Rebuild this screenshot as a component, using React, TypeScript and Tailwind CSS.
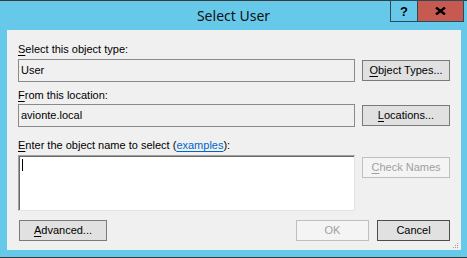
import React from "react";

const font = { fontFamily: '"Liberation Sans", Arial, sans-serif' };

function Btn({
  children,
  className = "",
  disabled = false,
  dark = false,
}: {
  children: React.ReactNode;
  className?: string;
  disabled?: boolean;
  dark?: boolean;
}) {
  const look = disabled
    ? "border-[#bfbfbf] bg-[#f4f4f4] text-[#a0a0a0]"
    : dark
    ? "border-[#4d4d4d] bg-[#e1e1e1] text-black"
    : "border-[#7a7a7a] bg-[#e1e1e1] text-black";
  return (
    <div
      className={`flex h-[21px] items-center justify-center border text-[11px] leading-[13px] ${look} ${className}`}
    >
      {children}
    </div>
  );
}

function U({ children }: { children: React.ReactNode }) {
  return <span className="underline underline-offset-[2px]">{children}</span>;
}

export default function App() {
  return (
    <div
      className="flex h-[258px] w-[467px] flex-col border-y border-[#3a3a3a] bg-[#67c9ea]"
      style={font}
    >
      {/* title bar */}
      <div className="relative flex h-[29px] items-center justify-center">
        <span
          className="pt-[1px] text-[14px] leading-[18px] text-[#111]"
          style={{ fontFamily: '"Noto Sans", "Open Sans", sans-serif' }}
        >
          Select User
        </span>
        <div className="absolute -top-px right-[3px] flex h-[22px] border border-[#2e4a58]">
          <div className="flex w-[27px] items-center justify-center border-r border-[#2e4a58] bg-[#67c9ea] text-[13px] font-bold leading-none text-black">
            ?
          </div>
          <div className="flex w-[45px] items-center justify-center bg-[#c75a50]">
            <svg width="11" height="8" viewBox="0 0 11 8">
              <path d="M1 0.5 L10 7.5 M10 0.5 L1 7.5" stroke="#000" strokeWidth="2.4" />
            </svg>
          </div>
        </div>
      </div>

      {/* client */}
      <div className="relative ml-[7px] h-[220px] w-[454px] bg-[#f0f0f0] px-[11px] text-[11px] leading-[13px] text-black">
        <div className="mt-[13px]">
          <U>S</U>elect this object type:
        </div>
        <div className="mt-[3px] flex items-start">
          <div className="flex h-[23px] w-[337px] items-center border border-[#8a8a8a] pl-[2px]">
            User
          </div>
          <Btn className="ml-[7px] mt-px w-[88px]">
            <span>
              <U>O</U>bject Types...
            </span>
          </Btn>
        </div>

        <div className="mt-[7px]">
          <U>F</U>rom this location:
        </div>
        <div className="mt-[2px] flex items-start">
          <div className="flex h-[23px] w-[337px] items-center border border-[#8a8a8a] pl-[2px]">
            avionte.local
          </div>
          <Btn className="ml-[7px] mt-px w-[88px]">
            <span>
              <U>L</U>ocations...
            </span>
          </Btn>
        </div>

        <div className="mt-[12px]">
          <U>E</U>nter the object name to select (
          <span className="text-[#0066cc] underline underline-offset-[2px]">examples</span>):
        </div>
        <div className="mt-[3px] flex items-start">
          <div className="h-[56px] w-[337px] border-b border-l border-r border-t border-b-[#e3e3e3] border-l-[#a0a0a0] border-r-[#e3e3e3] border-t-[#a0a0a0] bg-white pl-[2px] pt-[3px] shadow-[inset_1px_1px_0_#696969]">
            <div className="ml-[1px] h-[12px] w-px bg-black" />
          </div>
          <Btn disabled className="ml-[7px] mt-[2px] w-[88px]">
            <span>
              <U>C</U>heck Names
            </span>
          </Btn>
        </div>

        <div className="mt-[9px] flex items-start">
          <Btn className="ml-px w-[88px]">
            <span>
              <U>A</U>dvanced...
            </span>
          </Btn>
          <div className="flex-1" />
          <Btn disabled className="w-[73px]">
            OK
          </Btn>
          <Btn dark className="ml-[8px] w-[73px]">
            Cancel
          </Btn>
        </div>

        <svg
          className="absolute bottom-[1px] right-[2px]"
          width="7"
          height="7"
          viewBox="0 0 7 7"
        >
          <rect x="5" y="1" width="1" height="1" fill="#a0a0a0" />
          <rect x="3" y="3" width="1" height="1" fill="#a0a0a0" />
          <rect x="5" y="3" width="1" height="1" fill="#a0a0a0" />
          <rect x="1" y="5" width="1" height="1" fill="#a0a0a0" />
          <rect x="3" y="5" width="1" height="1" fill="#a0a0a0" />
          <rect x="5" y="5" width="1" height="1" fill="#a0a0a0" />
        </svg>
      </div>
    </div>
  );
}
